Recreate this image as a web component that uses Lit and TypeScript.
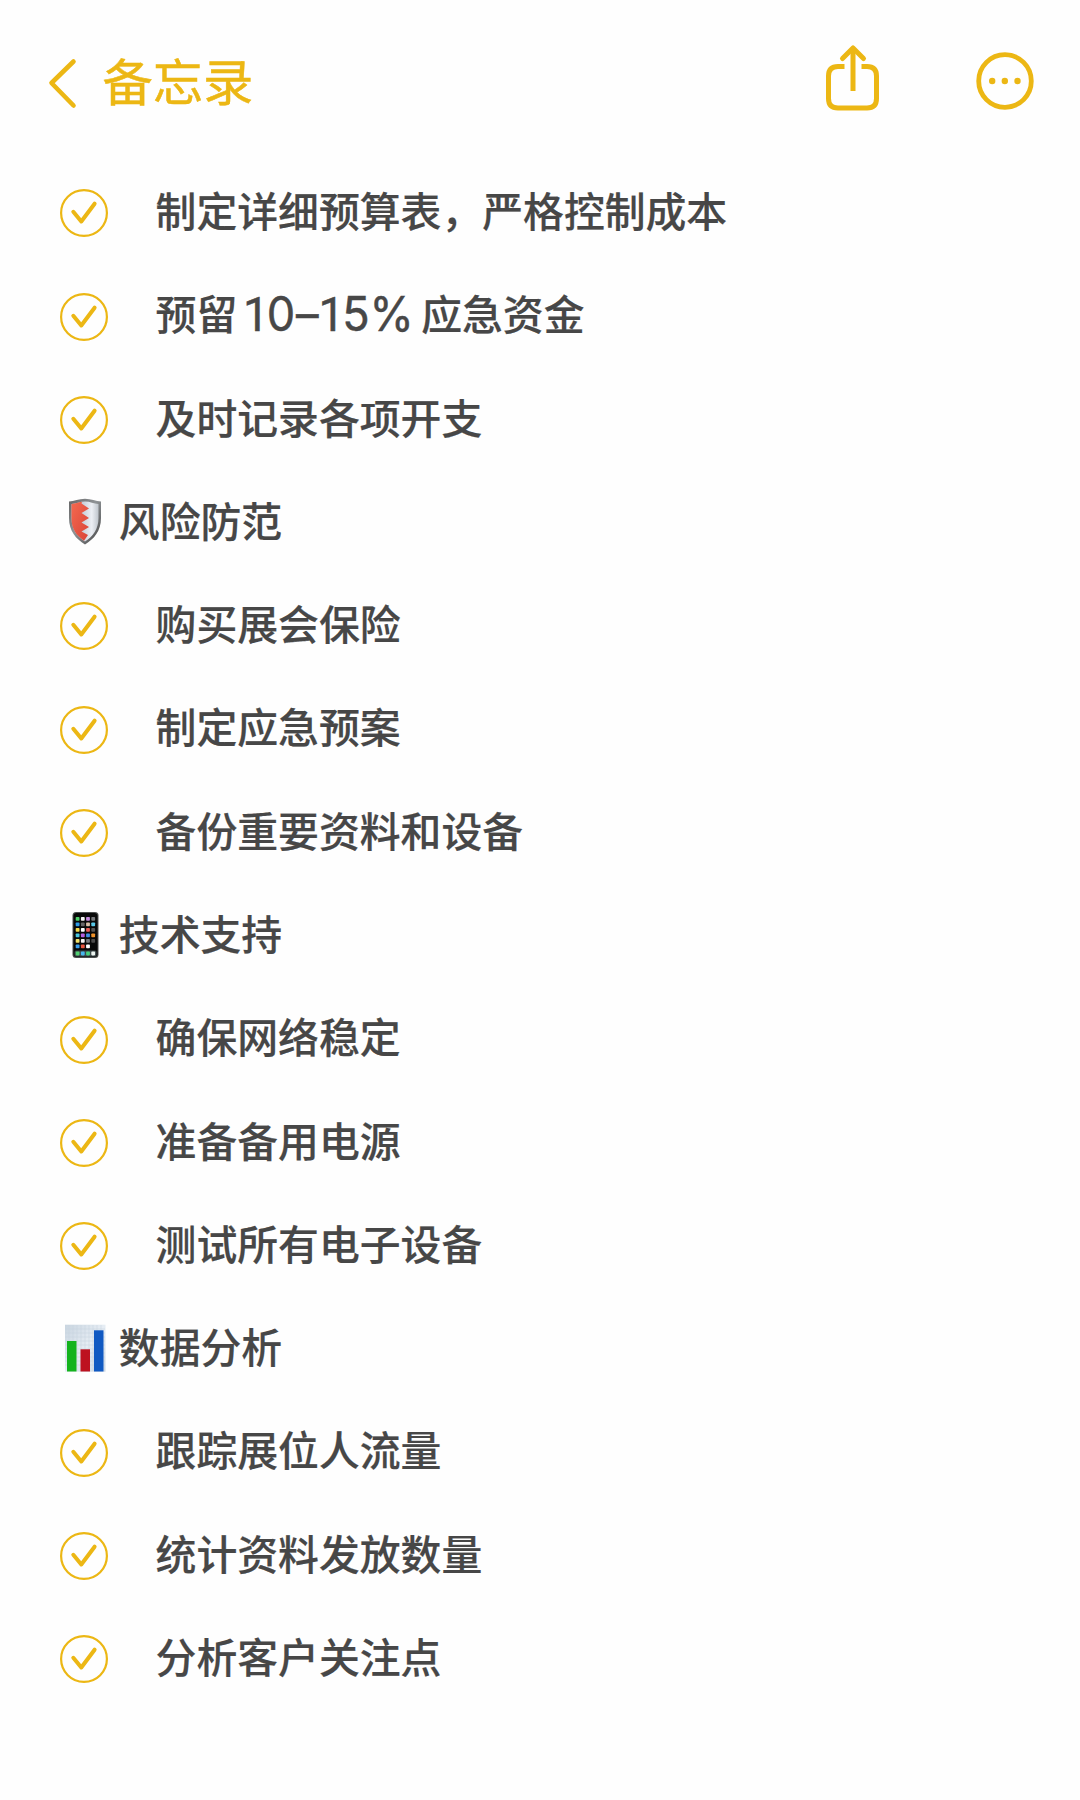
import { LitElement, html, svg, css } from "lit";
import { customElement, property } from "lit/decorators.js";

type Row = { text?: string; kind?: "shield" | "phone" | "chart"; parts?: [string, string, string] };

const ROWS: Row[] = [
  { text: "制定详细预算表，严格控制成本" },
  { parts: ["预留", "10–15%", "应急资金"] },
  { text: "及时记录各项开支" },
  { kind: "shield", text: "风险防范" },
  { text: "购买展会保险" },
  { text: "制定应急预案" },
  { text: "备份重要资料和设备" },
  { kind: "phone", text: "技术支持" },
  { text: "确保网络稳定" },
  { text: "准备备用电源" },
  { text: "测试所有电子设备" },
  { kind: "chart", text: "数据分析" },
  { text: "跟踪展位人流量" },
  { text: "统计资料发放数量" },
  { text: "分析客户关注点" },
];

const APPS = [
  ["#4fd06a", "#f4f4f4", "#c68ae0", "#77797c"],
  ["#2f9be8", "#666", "#d8bfa8", "#58c8e8"],
  ["#f5d94a", "#fff", "#ea5a55", "#555"],
  ["#49c6e0", "#b65fe0", "#3f8fe8", "#f0932b"],
  ["#f3e36b", "#f4f4f4", "#77797c", "#4c4c4c"],
  ["#3aa0ee", "#e8553f", "#fff", ""],
];

const shield = svg`
  <svg class="emoji" width="42" height="48" viewBox="0 0 42 48">
    <defs>
      <linearGradient id="rim" x1="0" y1="0" x2="1" y2="1">
        <stop offset="0" stop-color="#666"/><stop offset=".45" stop-color="#8f9396"/><stop offset="1" stop-color="#444"/>
      </linearGradient>
      <linearGradient id="steel" x1="0" y1="0" x2="1" y2="0">
        <stop offset=".4" stop-color="#c6ced8"/><stop offset=".75" stop-color="#eceff4"/><stop offset="1" stop-color="#bfc5cc"/>
      </linearGradient>
      <linearGradient id="red" x1="0" y1="0" x2="1" y2="1">
        <stop offset="0" stop-color="#f4694f"/><stop offset="1" stop-color="#d94338"/>
      </linearGradient>
    </defs>
    <path d="M5 3.500C10 3.200 15 .8 21 .8S32 3.200 37 3.500V20C37 33 30 41 21 46.500C12 41 5 33 5 20Z" fill="url(#rim)"/>
    <path d="M7.500 6C12 5.700 16 3.500 21 3.500S30 5.700 34.500 6V20C34.500 31 29 38.500 21 43.500C13 38.500 7.500 31 7.500 20Z" fill="url(#steel)"/>
    <path d="M7.500 6C11.500 5.700 14 4.300 18 3.800L17.500 5.500L25 10.500L17.500 15L25 20L17.500 24.500L25 29L17.500 33.500L24 37L20 42.800C12 37 7.500 31 7.500 20Z" fill="url(#red)"/>
  </svg>`;

const phone = svg`
  <svg class="emoji" width="42" height="48" viewBox="0 0 42 48">
    <rect x="8.500" y="1" width="26" height="46" rx="3.500" fill="#4c4f4f"/>
    <rect x="9.500" y="2" width="24" height="44" rx="3" fill="#080909"/>
    <rect x="10.500" y="39.500" width="22" height="6" rx="1.500" fill="#3e4a4c"/>
    ${APPS.map((r, y) => r.map((c, x) => (c ? svg`<rect x=${11.7 + x * 5.2} y=${6 + y * 5.5} width="3.800" height="3.800" rx=".8" fill=${c}></rect>` : "")))}
    ${["#52d273", "#46b7ee", "#46d07b", "#eef6f2"].map((c, x) => svg`<rect x=${11.7 + x * 5.2} y="40.600" width="3.800" height="3.800" rx=".8" fill=${c}></rect>`)}
  </svg>`;

const chart = svg`
  <svg class="emoji" width="42" height="48" viewBox="0 0 42 48">
    <defs>
      <linearGradient id="paper" x1="0" y1="0" x2="1" y2="1">
        <stop offset="0" stop-color="#c9d5e0"/><stop offset=".5" stop-color="#e6edf4"/><stop offset="1" stop-color="#cdd8e4"/>
      </linearGradient>
    </defs>
    <rect x="1" y=".7" width="40.500" height="47" fill="url(#paper)"/>
    <path d="${[5, 9, 13, 17, 21, 25, 29, 33, 37].map((x) => `M${x} 1V47`).join("")}${[5, 9, 13, 17, 21, 25, 29, 33, 37, 41].map((y) => `M1 ${y}H41`).join("")}" stroke="#c6d2de" stroke-width=".5"/>
    <rect x="3" y="17" width="9.500" height="30.500" fill="#14b31d"/>
    <rect x="16.500" y="25.300" width="9.500" height="22.200" fill="#bd1220"/>
    <rect x="30" y="6.300" width="9.500" height="41.200" fill="#1059c2"/>
  </svg>`;

const EMOJI = { shield, phone, chart };

@customElement("memo-row")
class MemoRow extends LitElement {
  static styles = css`
    :host { display: flex; align-items: center; height: 103.27px; }
    .check { width: 50px; height: 50px; margin: 3.500px 46.600px 0 0; flex: none; }
    .head { display: flex; align-items: center; padding-left: 5px; }
    .emoji { display: block; flex: none; margin: 1px 12.800px 0 0; }
    .text {
      font: 500 40.850px/60px "Noto Sans CJK SC", sans-serif;
      color: #474747;
      -webkit-text-stroke: 0.2px #474747;
      white-space: nowrap;
      display: flex;
      align-items: baseline;
      margin-bottom: 3px;
    }
    .num {
      font: 400 47.500px/60px Inter, sans-serif;
      -webkit-text-stroke: 0.5px #474747;
      letter-spacing: -0.2px;
      display: flex;
      align-items: baseline;
      margin: 0 -1.700px 0 6px;
      transform: translateY(1px) scaleX(0.95);
      transform-origin: left;
    }
    .one { font-family: Roboto, sans-serif; font-size: 48.500px; letter-spacing: -2.200px; }
    .dash { margin-left: 1px; }
  `;
  @property({ attribute: false }) row: Row = {};
  number(value: string) {
    return [...value].map((c) => html`<span class=${c === "1" ? "one" : c === "–" ? "dash" : "digit"}>${c}</span>`);
  }
  render() {
    const { kind, text, parts } = this.row;
    if (kind) return html`<div class="head">${EMOJI[kind]}<span class="text">${text}</span></div>`;
    return html`
      <svg class="check" viewBox="0 0 50 50" fill="none" stroke="#ecb714">
        <circle cx="25" cy="25" r="22.900" stroke-width="2.200" />
        <path d="M14.300 23.800L22.300 33.500L35.600 15.700" stroke-width="4" stroke-linecap="round" stroke-linejoin="round" />
      </svg>
      <span class="text">${parts ? html`<span>${parts[0]}</span><span class="num">${this.number(parts[1])}</span><span>${parts[2]}</span>` : text}</span>`;
  }
}

@customElement("app-root")
class AppRoot extends LitElement {
  static styles = css`
    :host { display: block; min-height: 1800px; background: #fefefe; }
    .bar { display: flex; align-items: center; height: 160px; padding: 0 45px 0 46px; box-sizing: border-box; }
    .back { width: 32px; height: 52px; margin-top: 5px; }
    .title {
      font: 400 50.300px/72px "Noto Sans CJK SC", sans-serif;
      color: #ecb714;
      -webkit-text-stroke: 0.5px #ecb714;
      margin: 0 0 2px 24.500px;
    }
    .share { width: 60px; height: 72px; margin: 0 0 7px auto; }
    .more { width: 60px; height: 60px; margin-left: 92px; margin-top: 2px; }
    .list { padding-left: 59px; }
  `;
  render() {
    return html`
      <div class="bar">
        <svg class="back" viewBox="0 0 32 52" fill="none" stroke="#ecb714" stroke-width="4.600" stroke-linecap="round" stroke-linejoin="round">
          <path d="M27.500 4.500L5.500 26L27.500 48.500" />
        </svg>
        <span class="title">备忘录</span>
        <svg class="share" viewBox="0 0 60 72" fill="none" stroke="#ecb714" stroke-width="5">
          <path d="M21.500 25.500H15Q5.500 25.500 5.500 35V57.500Q5.500 67 15 67H44Q53.500 67 53.500 57.500V35Q53.500 25.500 44 25.500H38.500" />
          <path d="M30 50V7" />
          <path d="M19.500 17.500L30 7L40.500 17.500" stroke-linecap="round" stroke-linejoin="round" />
        </svg>
        <svg class="more" viewBox="0 0 60 60" fill="none">
          <circle cx="30" cy="30" r="26.300" stroke="#ecb714" stroke-width="4.800" />
          <circle cx="17.200" cy="30" r="3.200" fill="#ecb714" /><circle cx="29.800" cy="30" r="3.200" fill="#ecb714" /><circle cx="42.500" cy="30" r="3.200" fill="#ecb714" />
        </svg>
      </div>
      <div class="list">${ROWS.map((r) => html`<memo-row .row=${r}></memo-row>`)}</div>
    `;
  }
}
